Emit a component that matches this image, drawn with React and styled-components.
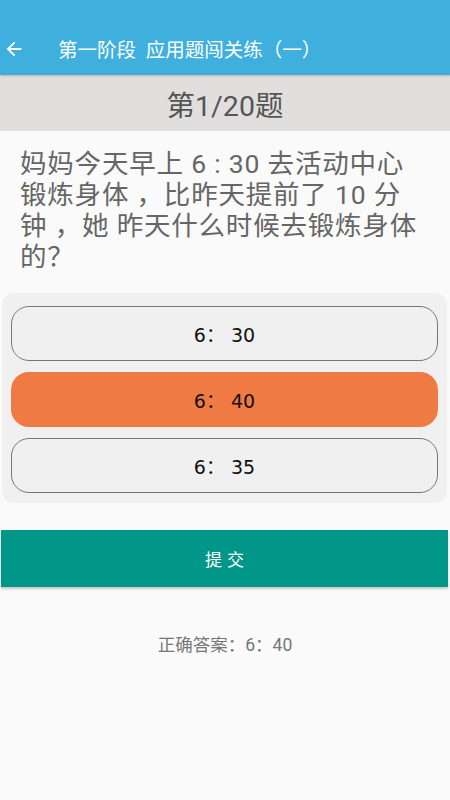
import React from "react";
import styled, { createGlobalStyle } from "styled-components";

const Global = createGlobalStyle`
  html, body { margin: 0; padding: 0; background: #fafafa; }
  body { font-family: Roboto, "Noto Sans CJK SC", sans-serif; }
`;

const Page = styled.div`
  width: 450px;
  min-height: 800px;
  background: #fafafa;
  display: flex;
  flex-direction: column;
`;

const AppBar = styled.header`
  height: 75px;
  background: #3fb0de;
  box-sizing: border-box;
  padding-top: 22px;
  display: flex;
  align-items: center;
  box-shadow: 0 1px 2px rgba(0,0,0,0.2);
  position: relative;
  z-index: 1;
`;

const BackBtn = styled.button`
  width: 28px;
  height: 28px;
  padding: 0;
  border: 0;
  background: none;
  display: flex;
  align-items: center;
  justify-content: center;
`;

const Title = styled.h1`
  margin: 0 0 0 30px;
  font-size: 19.5px;
  font-weight: 400;
  color: #fff;
`;

const Counter = styled.div`
  height: 56px;
  background: #e0dfde;
  display: flex;
  align-items: center;
  justify-content: center;
  font-size: 28.5px;
  color: #555;
`;

const Question = styled.p`
  margin: 0;
  padding: 17px 10px 0 20px;
  font-size: 26.5px;
  line-height: 31px;
  letter-spacing: 0.8px;
  color: #666;
  white-space: nowrap;
`;

const Options = styled.div`
  margin: 21px 3px 0 2px;
  padding: 13px 9px 10px;
  background: #f0f0f0;
  border-radius: 12px;
  display: flex;
  flex-direction: column;
  gap: 11px;
`;

const Option = styled.div`
  height: 55px;
  box-sizing: border-box;
  border-radius: 18px;
  border: ${(p) => (p.$selected ? "none" : "1.5px solid #777")};
  background: ${(p) => (p.$selected ? "#ef7a44" : "#f0f0f0")};
  display: flex;
  align-items: center;
  justify-content: center;
  font-family: "DejaVu Sans", "Noto Sans CJK SC", sans-serif;
  font-size: 19px;
  color: #111;
`;

const Submit = styled.button`
  margin: 27px 2px 0 1px;
  height: 57px;
  border: 0;
  background: #009688;
  color: #fff;
  font-family: Roboto, "Noto Sans CJK SC", sans-serif;
  font-size: 17px;
  letter-spacing: 5px;
  text-indent: 5px;
  box-shadow: 0 2px 2px rgba(0,0,0,0.2);
`;

const Answer = styled.div`
  margin-top: 44px;
  text-align: center;
  font-size: 17.5px;
  color: #777;
`;

const options = ["6：30", "6：40", "6：35"];

const questionLines = [
  "妈妈今天早上 6 : 30 去活动中心",
  "锻炼身体 ，比昨天提前了 10 分",
  "钟 ，她 昨天什么时候去锻炼身体",
  "的？",
];

export default function App() {
  return (
    <Page>
      <Global />
      <AppBar>
        <BackBtn aria-label="back">
          <svg width="22" height="22" viewBox="0 0 24 24">
            <path d="M20 11H7.83l5.59-5.59L12 4l-8 8 8 8 1.41-1.41L7.83 13H20v-2z" fill="#fff" />
          </svg>
        </BackBtn>
        <Title>第一阶段&nbsp;&nbsp;应用题闯关练（一）</Title>
      </AppBar>
      <Counter>第1/20题</Counter>
      <Question>
        {questionLines.map((line, i) => (
          <React.Fragment key={i}>
            {line}
            {i < questionLines.length - 1 && <br />}
          </React.Fragment>
        ))}
      </Question>
      <Options>
        {options.map((o, i) => (
          <Option key={o} $selected={i === 1}>{o.replace("：", "： ")}</Option>
        ))}
      </Options>
      <Submit>提交</Submit>
      <Answer>正确答案：6：40</Answer>
    </Page>
  );
}
